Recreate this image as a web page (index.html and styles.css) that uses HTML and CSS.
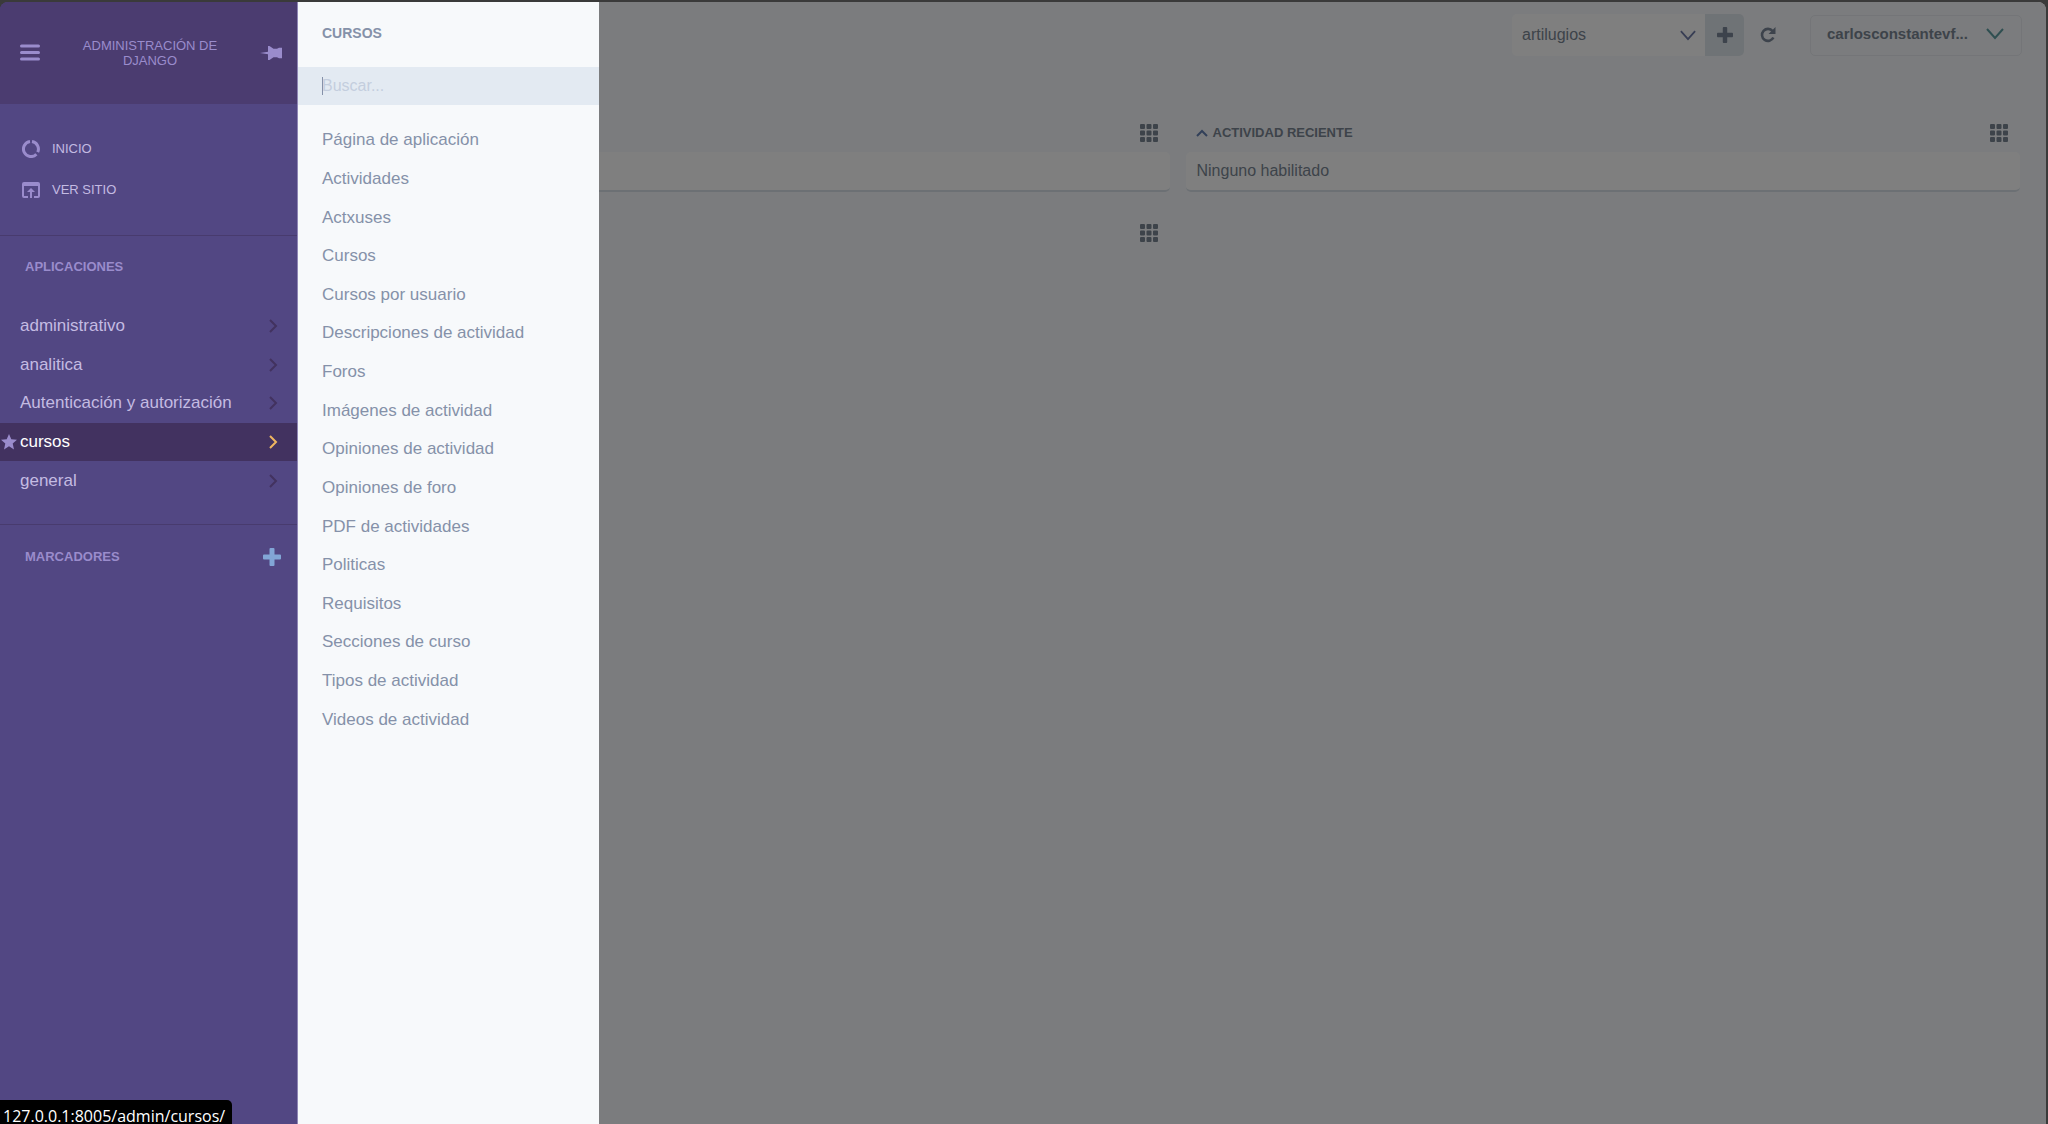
FILE: index.html
```html
<!DOCTYPE html>
<html lang="es">
<head>
<meta charset="utf-8">
<title>Administración de Django</title>
<link rel="stylesheet" href="styles.css">
</head>
<body>
<svg class="defs" aria-hidden="true">
  <symbol id="grid" viewBox="0 0 18 18"><path d="M1 0h3v0q1 0 1 1v3q0 1-1 1H1Q0 5 0 4V1Q0 0 1 0zM7.500 0h3q1 0 1 1v3q0 1-1 1h-3q-1 0-1-1V1q0-1 1-1zM14 0h3q1 0 1 1v3q0 1-1 1h-3q-1 0-1-1V1q0-1 1-1zM1 6.500h3q1 0 1 1v3q0 1-1 1H1q-1 0-1-1v-3q0-1 1-1zM7.500 6.500h3q1 0 1 1v3q0 1-1 1h-3q-1 0-1-1v-3q0-1 1-1zM14 6.500h3q1 0 1 1v3q0 1-1 1h-3q-1 0-1-1v-3q0-1 1-1zM1 13h3q1 0 1 1v3q0 1-1 1H1q-1 0-1-1v-3q0-1 1-1zM7.500 13h3q1 0 1 1v3q0 1-1 1h-3q-1 0-1-1v-3q0-1 1-1zM14 13h3q1 0 1 1v3q0 1-1 1h-3q-1 0-1-1v-3q0-1 1-1z"/></symbol>
  <symbol id="plus" viewBox="0 0 18 18"><path d="M7.500 0h3q1 0 1 1v5.500H17q1 0 1 1v3q0 1-1 1h-5.500V17q0 1-1 1h-3q-1 0-1-1v-5.500H1q-1 0-1-1v-3q0-1 1-1h5.500V1q0-1 1-1z"/></symbol>
  <symbol id="right" viewBox="0 0 10 14"><path d="M2 1l6 6-6 6" fill="none" stroke="currentColor" stroke-width="2"/></symbol>
  <symbol id="down" viewBox="0 0 18 12"><path d="M1 1l8 9 8-9" fill="none" stroke="currentColor" stroke-width="2"/></symbol>
</svg>
<div class="app">
  <aside class="sidebar">
    <header class="brand">
      <button class="plain" aria-label="Menú"><svg width="20" height="18" viewBox="0 0 20 18"><path d="M1.500 2h17M1.500 8.500h17M1.500 15h17" stroke="currentColor" stroke-width="3" stroke-linecap="round"/></svg></button>
      <a class="brand-name" href="#">ADMINISTRACIÓN DE DJANGO</a>
      <button class="plain pin" aria-label="Fijar menú"><svg width="22" height="16" viewBox="0 0 22 16"><path d="M0 8l8-1.200V1h1.500l4 2.800H17l2-1h3v10.400h-3l-2-1h-3.500l-4 2.800H8V9.200z"/></svg></button>
    </header>
    <nav class="site-links">
      <a href="#"><svg width="18" height="18" viewBox="0 0 18 18"><path fill="none" stroke="currentColor" stroke-width="3" d="M10 1.600a7.500 7.500 0 0 1 5.700 10.600M14.400 14.200A7.500 7.500 0 1 1 8 1.600"/></svg>INICIO</a>
      <a href="#"><svg width="18" height="16" viewBox="0 0 18 16"><path d="M2 0h14q2 0 2 2v12q0 2-2 2h-4v-2h4V4H2v10h4v2H2q-2 0-2-2V2q0-2 2-2zM9 6l4 4h-3v6H8v-6H5z"/></svg>VER SITIO</a>
    </nav>
    <section class="group">
      <h2>APLICACIONES</h2>
      <nav class="rows apps">
        <a href="#">administrativo<svg width="10" height="14"><use href="#right"/></svg></a>
        <a href="#">analitica<svg width="10" height="14"><use href="#right"/></svg></a>
        <a href="#">Autenticación y autorización<svg width="10" height="14"><use href="#right"/></svg></a>
        <a class="active" href="#"><svg class="star" width="16" height="16" viewBox="0 0 16 16"><path d="M8 0l2.300 5.300 5.700.4-4.300 3.800L13 15.500l-5-3.200-5 3.200 1.300-6L0 5.700l5.700-.4z"/></svg>cursos<svg width="10" height="14"><use href="#right"/></svg></a>
        <a href="#">general<svg width="10" height="14"><use href="#right"/></svg></a>
      </nav>
    </section>
    <section class="group bookmarks">
      <h2>MARCADORES</h2>
      <button class="plain add" aria-label="Agregar marcador"><svg width="18" height="18"><use href="#plus"/></svg></button>
    </section>
  </aside>

  <main class="main">
    <div class="toolbar">
      <div class="widget-picker">
        <div class="select">
          <select aria-label="Artilugios"><option>artilugios</option></select>
          <svg width="16" height="11"><use href="#down"/></svg>
        </div>
        <button class="add-widget" aria-label="Agregar"><svg width="16" height="16"><use href="#plus"/></svg></button>
      </div>
      <button class="plain reload" aria-label="Restablecer"><svg width="16" height="16" viewBox="0 0 16 16"><path d="M12.600 4A6 6 0 1 0 13.400 10.500" fill="none" stroke="currentColor" stroke-width="2.600"/><path d="M15.500 0v7H8.500z"/></svg></button>
      <button class="user"><span>carlosconstantevf...</span><svg width="18" height="12"><use href="#down"/></svg></button>
    </div>
    <div class="columns">
      <div class="column">
        <section class="module">
          <header><svg class="grip" width="18" height="18"><use href="#grid"/></svg></header>
          <div class="card"></div>
        </section>
        <section class="module">
          <header><svg class="grip" width="18" height="18"><use href="#grid"/></svg></header>
        </section>
      </div>
      <div class="column">
        <section class="module">
          <header><svg class="up" width="12" height="8" viewBox="0 0 12 8"><path d="M1 7l5-5 5 5" fill="none" stroke="currentColor" stroke-width="2"/></svg><h2>ACTIVIDAD RECIENTE</h2><svg class="grip" width="18" height="18"><use href="#grid"/></svg></header>
          <div class="card">Ninguno habilitado</div>
        </section>
      </div>
    </div>
    <div class="shade"></div>
  </main>

  <aside class="panel">
    <h2>CURSOS</h2>
    <div class="search"><input type="text" placeholder="Buscar..." aria-label="Buscar"></div>
    <nav class="rows models">
      <a href="#">Página de aplicación</a>
      <a href="#">Actividades</a>
      <a href="#">Actxuses</a>
      <a href="#">Cursos</a>
      <a href="#">Cursos por usuario</a>
      <a href="#">Descripciones de actividad</a>
      <a href="#">Foros</a>
      <a href="#">Imágenes de actividad</a>
      <a href="#">Opiniones de actividad</a>
      <a href="#">Opiniones de foro</a>
      <a href="#">PDF de actividades</a>
      <a href="#">Politicas</a>
      <a href="#">Requisitos</a>
      <a href="#">Secciones de curso</a>
      <a href="#">Tipos de actividad</a>
      <a href="#">Videos de actividad</a>
    </nav>
  </aside>
  <div class="status">127.0.0.1:8005/admin/cursos/</div>
</div>
</body>
</html>
```
FILE: styles.css
```css
* { box-sizing: border-box; }

body {
  margin: 0;
  background: #3a3a3a;
  font: 17px/20px "Liberation Sans", Arial, sans-serif;
}

h2 { margin: 0; font-size: 13px; line-height: 16px; }
a { color: inherit; text-decoration: none; }
button, input, select { font: inherit; color: inherit; margin: 0; }
svg { display: block; flex: none; fill: currentColor; }
.defs { position: absolute; width: 0; height: 0; }
.plain { padding: 0; border: 0; background: none; }

.app {
  position: relative;
  display: grid;
  grid-template-columns: 298px 1fr;
  height: 100vh;
  padding: 2px 2px 0 0;
  overflow: hidden;
}

/* Sidebar */
.sidebar {
  background: #524783;
  border-right: 1px solid #8f86b5;
  border-top-left-radius: 8px;
  overflow: hidden;
  color: #9a8ccc;
}

.brand {
  display: flex;
  align-items: center;
  justify-content: space-between;
  height: 102px;
  padding: 0 15px 0 20px;
  background: #4b3c70;
}

.brand-name {
  width: 150px;
  font-size: 13px;
  line-height: 15px;
  text-align: center;
}

.site-links {
  display: grid;
  gap: 21px;
  padding: 35px 22px;
  border-bottom: 1px solid #483b6e;
  color: #c4bbe2;
  font-size: 13px;
}

.site-links a { display: flex; align-items: center; gap: 12px; }
.site-links svg { color: #9a8ccc; }

.group { padding-top: 23px; border-bottom: 1px solid #483b6e; }
.group h2 { padding-left: 25px; }

.rows { display: grid; grid-auto-rows: 1fr; }
.rows a { display: flex; align-items: center; }

.apps { height: 193px; margin: 32px 0 24px; color: #c4bbe2; }
.apps a { position: relative; justify-content: space-between; padding: 0 19px 0 20px; }
.apps svg { color: #42325f; }
.apps .active { background: #423260; color: #fff; }
.apps .active svg { color: #efb660; }
.apps .active .star { position: absolute; left: 1px; color: #9a8ccc; }

.bookmarks {
  display: flex;
  align-items: center;
  justify-content: space-between;
  padding-right: 16px;
  border: 0;
}

.add { color: #82a6d6; }

/* Model panel */
.panel {
  position: absolute;
  top: 2px;
  bottom: 0;
  left: 298px;
  width: 301px;
  background: #f7f9fb;
  color: #8591a9;
}

.panel h2 { padding: 23px 24px 26px; font-size: 14px; }

.search {
  position: relative;
  height: 38px;
  background: #e3eaf2;
  font-size: 16px;
}

.search input {
  width: 100%;
  height: 38px;
  padding: 0 24px;
  border: 0;
  background: none;
  outline: 0;
}

.search input::placeholder { color: #c4cede; }

/* Text cursor of the focused search box */
.search::before {
  content: "";
  position: absolute;
  top: 10px;
  left: 24px;
  width: 1px;
  height: 18px;
  background: #8591a9;
}

.models { height: 618px; margin-top: 16px; }
.models a { padding: 0 24px; }

/* Dashboard */
.main {
  position: relative;
  padding: 12px 24px 0 37px;
  background: #f7f9fc;
  border-top-right-radius: 8px;
  overflow: hidden;
  color: #7b8794;
  font-size: 16px;
}

.toolbar { display: flex; justify-content: flex-end; align-items: center; }

.widget-picker { display: flex; border-radius: 5px; overflow: hidden; }
.select { position: relative; display: flex; align-items: center; }

.select select {
  width: 193px;
  height: 42px;
  padding: 0 10px;
  border: 0;
  background: #fff;
  appearance: none;
}

.select svg { position: absolute; right: 9px; color: #707ca8; }

.add-widget {
  display: grid;
  place-items: center;
  width: 39px;
  padding: 0;
  border: 0;
  background: #dfe6ec;
  color: #7a8798;
}

.reload { margin: 0 34px 0 16px; color: #7a8798; }

.user {
  display: flex;
  align-items: center;
  justify-content: space-between;
  width: 212px;
  height: 41px;
  padding: 0 17px 2px 16px;
  border: 1px solid #e8ebf0;
  border-radius: 5px;
  background: none;
  font-size: 15px;
  font-weight: bold;
}

.user svg { color: #5f9ea3; }

.columns { display: grid; grid-template-columns: 1fr 1fr; gap: 16px; padding: 58px 2px 0 0; }
.module header { display: flex; align-items: center; height: 38px; padding: 0 12px 0 10px; }
.module + .module { margin-top: 22px; }
.grip { margin-left: auto; }
.up { margin-right: 5px; color: #6581b3; }

.card {
  height: 40px;
  padding: 9px 11px;
  border-bottom: 2px solid #d8e0e8;
  border-radius: 5px;
  background: #fff;
}

.shade { position: absolute; inset: 0; background: rgba(0, 0, 0, 0.5); }

/* Link address bubble */
.status {
  position: absolute;
  left: 0;
  bottom: 0;
  height: 24px;
  padding: 6px 7px 0 3px;
  border-top-right-radius: 5px;
  background: #000;
  color: #fff;
  font: 16px/20px "Open Sans", sans-serif;
}
```
